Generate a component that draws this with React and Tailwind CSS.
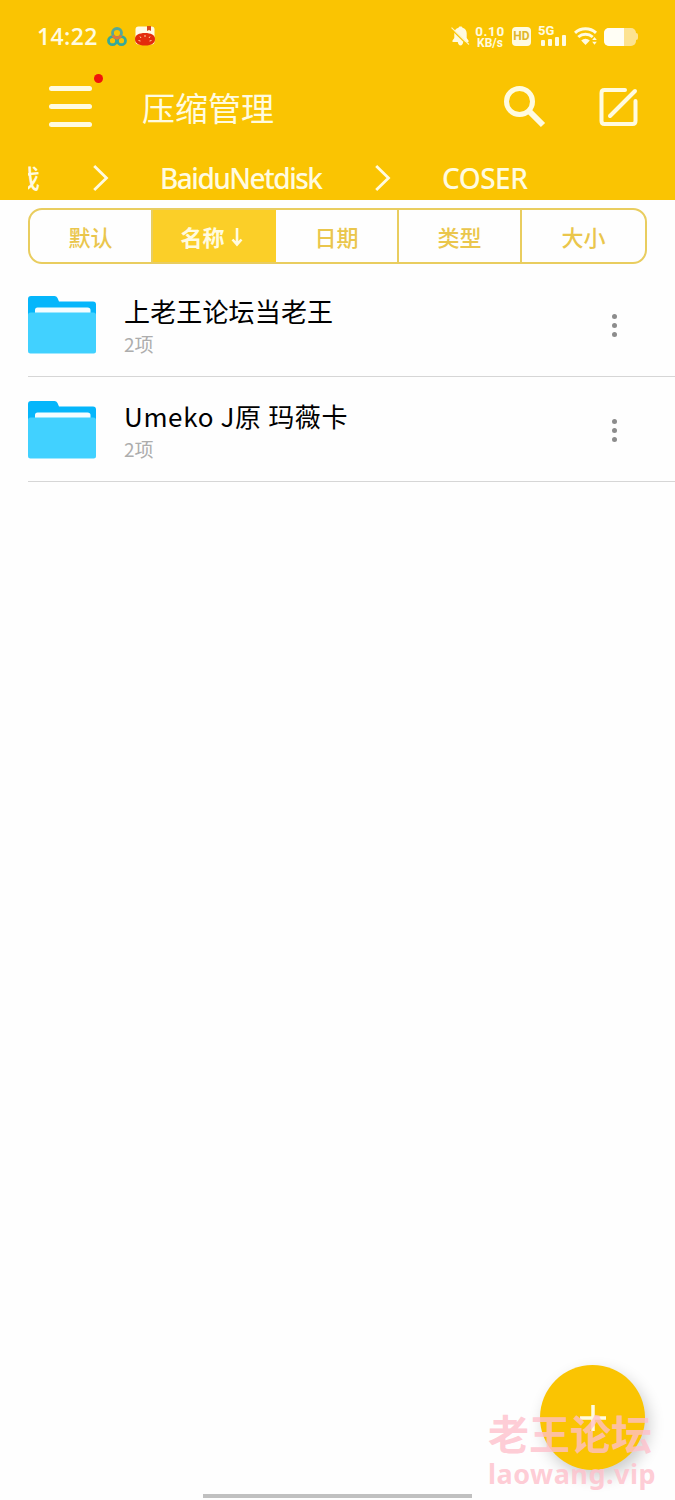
const crumbs = ["BaiduNetdisk", "COSER"];

const tabs = [
  { label: "默认" },
  { label: "名称", active: true },
  { label: "日期" },
  { label: "类型" },
  { label: "大小" },
];

const folders = [
  { name: "上老王论坛当老王", count: "2项", spacing: "tracking-[0.15px]" },
  { name: "Umeko J原 玛薇卡", count: "2项", spacing: "tracking-[0.65px]" },
];

function MuteIcon() {
  return (
    <svg width="19" height="20" viewBox="0 0 19 20" fill="none">
      <path
        d="M9.500 0.500c1.200 0 1.800.5 2 1.200 2.700.7 4.200 2.800 4.200 5.600v4.700l1.800 2.600v1.400H1.500v-1.400l1.800-2.600V7.300c0-2.800 1.500-4.900 4.200-5.600.2-.7.8-1.200 2-1.200zM6.800 16h5.400c-.3 2-1.300 3.500-2.700 3.500S7.100 18 6.800 16z"
        fill="#fffbe0"
      />
      <path d="M0.500 3.200 16.500 19" stroke="#fac402" strokeWidth="1.300" />
      <path d="M0.500 1.700 18 18.500" stroke="#fff3bd" strokeWidth="1.100" />
    </svg>
  );
}

function StatusBar() {
  return (
    <div className="flex h-[72px] items-center pl-[37px] pr-[37px] text-[#fffbe0]">
      <span className="w-[62px] whitespace-nowrap text-[23px] font-semibold leading-none tracking-[0.4px] font-['Open_Sans','Noto_Sans',sans-serif]">
        14:22
      </span>
      <svg className="ml-2 mt-px" width="20" height="20" viewBox="0 0 20 20" fill="none" strokeWidth="2.800">
        <circle cx="5.500" cy="13.700" r="4" stroke="#35a99a" />
        <circle cx="14.500" cy="13.700" r="4" stroke="#35a99a" />
        <circle cx="10" cy="6" r="4.500" stroke="#55a898" />
        <path d="M6 8.500a4.600 4.600 0 0 0 8 0" stroke="#e3763b" />
        <path d="M10 10v2.500" stroke="#e3763b" />
      </svg>
      <svg className="ml-2" width="20" height="20" viewBox="0 0 20 20">
        <rect x="0.500" y="0.500" width="19" height="18" rx="3" fill="#fffbe8" />
        <path d="M12 0h4v5l-2-1-2 1z" fill="#d94a1c" />
        <path d="M0 13c0-4 4-6 10-6s10 2 10 6-3 6.500-10 6.500S0 17 0 13z" fill="#e32b0c" />
        <path
          d="m5 10.500 1 1.500M10 9v2M15 10.500l-1 1.500M3.500 14.500l2 .5M16.500 14.500l-2 .5"
          stroke="#ffd9a0"
          strokeWidth="1"
        />
      </svg>

      <div className="ml-auto flex items-center">
        <MuteIcon />
        <div className="ml-[5px] mt-px flex w-[30px] flex-col items-center whitespace-nowrap font-bold font-['Roboto',sans-serif]">
          <span className="text-[13.500px] leading-[12px] tracking-[0.600px]">0.10</span>
          <span className="text-[12px] leading-[12px]">KB/s</span>
        </div>
        <div className="ml-[7px] mr-px flex h-[19px] w-[19px] items-center justify-center rounded-[4px] bg-[#fffbe0] text-[12px] font-bold leading-none text-[#e0b62a] font-['Roboto',sans-serif]">
          HD
        </div>
        <div className="ml-[6px] flex h-[22px] w-[30px] flex-col">
          <span className="text-[13px] font-bold leading-[11px] font-['Roboto',sans-serif]">5G</span>
          <div className="-mt-px flex items-end gap-[3px] self-end pr-[2px]">
            <i className="h-[6px] w-[4px] rounded-[1px] bg-[#fffbe0]" />
            <i className="h-[7px] w-[4px] rounded-[1px] bg-[#fffbe0]" />
            <i className="h-[9px] w-[4px] rounded-[1px] bg-[#fffbe0]" />
            <i className="h-[11px] w-[4px] rounded-[1px] bg-[#fffbe0]" />
          </div>
        </div>
        <svg className="ml-[6px]" width="24" height="20" viewBox="0 0 24 20" fill="none" stroke="#fffbe0" strokeWidth="3">
          <path d="M1 6.800a15.500 15.500 0 0 1 21 0" />
          <path d="M4.300 11a10.800 10.800 0 0 1 14.400 0" />
          <path d="M11.500 19l-4.300-4.600a6.500 6.500 0 0 1 8.600 0z" fill="#fffbe0" stroke="none" />
          <path d="M18.200 14 20.500 11l2.300 3zM18.200 15.800l2.300 3 2.300-3z" fill="#fffbe0" stroke="none" />
        </svg>
        <div className="ml-[6px] mt-px flex h-[18px] w-[32px] overflow-hidden rounded-[5px] bg-[#fde391]">
          <div className="w-5 bg-[#fffef5]" />
        </div>
        <div className="h-[7px] w-[2px] rounded-r bg-[#fde391]" />
      </div>
    </div>
  );
}

function TitleBar() {
  return (
    <div className="flex h-[84px] items-center pl-[49px] pr-[36px]">
      <div className="relative -mt-[15px] flex h-[41px] w-[43px] flex-col justify-between">
        <div className="h-[5px] rounded-full bg-[#fffbe0]" />
        <div className="h-[5px] rounded-full bg-[#fffbe0]" />
        <div className="h-[5px] rounded-full bg-[#fffbe0]" />
        <span className="absolute -top-[12px] left-[45px] h-[9px] w-[9px] rounded-full bg-[#f0140a]" />
      </div>
      <h1 className="-mt-[11px] ml-[50px] whitespace-nowrap text-[33px] font-normal leading-none text-[#fffbe0]">
        压缩管理
      </h1>
      <svg className="-mt-[17px] ml-auto" width="44" height="44" viewBox="0 0 44 44" fill="none" stroke="#fffbe0">
        <circle cx="16.500" cy="17.500" r="13" strokeWidth="5" />
        <path d="M26 27 40 41" strokeWidth="6" />
      </svg>
      <svg
        className="-mt-[15px] ml-[50px]"
        width="42"
        height="40"
        viewBox="0 0 42 40"
        fill="none"
        stroke="#fffbe0"
        strokeWidth="4"
        strokeLinecap="round"
        strokeLinejoin="round"
      >
        <path d="M28 3H7.500q-3 0-3 3v28q0 3 3 3h28q3 0 3-3V14" />
        <path d="M13 29 38 4" />
      </svg>
    </div>
  );
}

function Chevron() {
  return (
    <svg width="16" height="27" viewBox="0 0 16 27" fill="none" stroke="#fffbe0" strokeWidth="2.800">
      <path d="M1.200 1 13.500 13 1.200 25" />
    </svg>
  );
}

function Breadcrumbs() {
  return (
    <div className="flex h-[44px] items-center pl-7 text-[28px] text-[#fffbe0]">
      {/* scrolled out of view on the left */}
      <div className="flex w-3 justify-end overflow-hidden">
        <span className="text-[25px] font-medium leading-[32px]">戏</span>
      </div>
      <div className="ml-[53px] flex w-[67px]">
        <Chevron />
      </div>
      <span className="w-[162px] whitespace-nowrap font-medium tracking-[-1.500px]">{crumbs[0]}</span>
      <div className="ml-[53px] flex w-[67px]">
        <Chevron />
      </div>
      <span className="whitespace-nowrap font-medium tracking-[-0.500px]">{crumbs[1]}</span>
    </div>
  );
}

function SortTabs() {
  return (
    <div className="mx-7 mt-2 grid h-14 grid-cols-5 overflow-hidden rounded-[14px] border-2 border-[#e9cd5f]">
      {tabs.map((tab, i) => (
        <div
          key={tab.label}
          className={`flex items-center justify-center pt-px text-[22px] leading-none ${
            i < tabs.length - 1 ? "border-r-2" : ""
          } ${
            tab.active
              ? "border-[#fbcf28] bg-[#fbcf28] pr-1 font-bold text-[#fffbe0]"
              : "border-[#e9cd5f] font-medium text-[#eac64c]"
          }`}
        >
          {tab.label}
          {tab.active && (
            <svg className="ml-1.5" width="12" height="20" viewBox="0 0 12 20" fill="none" stroke="#fffbe0" strokeWidth="2.600">
              <path d="M6 1v16M1.500 12.500 6 17.500l4.500-5" />
            </svg>
          )}
        </div>
      ))}
    </div>
  );
}

function FolderIcon() {
  return (
    <svg width="68" height="58" viewBox="0 0 68 58">
      <path d="M0 20V3q0-3 3-3h23.500q2 0 3 2l1.500 3.500h34q3 0 3 3V20z" fill="#05b6fb" />
      <path d="M7 19v-5q0-2.500 2.500-2.500h50q3 0 3 2.500v5z" fill="#f4fdff" />
      <path d="M0 19q0-2.500 2.500-2.500h63q2.500 0 2.500 2.500v36q0 2.500-2.500 2.500h-63Q0 57.500 0 55z" fill="#41d1ff" />
    </svg>
  );
}

function FolderRow({ folder }) {
  return (
    <div className="ml-7 flex h-[105.500px] items-center border-b border-[#d6d6d6] pt-[3px] font-['Noto_Sans_CJK_SC',sans-serif]">
      <FolderIcon />
      <div className="ml-7 flex-1 pt-0.5">
        <p className={`whitespace-nowrap text-[26px] leading-[36px] text-black ${folder.spacing}`}>{folder.name}</p>
        <p className="text-[19px] font-normal leading-[30px] text-[#adadad]">{folder.count}</p>
      </div>
      <div className="mr-[58px] mt-px flex flex-col gap-1">
        <i className="h-[5px] w-[5px] rounded-full bg-[#8c8c8c]" />
        <i className="h-[5px] w-[5px] rounded-full bg-[#8c8c8c]" />
        <i className="h-[5px] w-[5px] rounded-full bg-[#8c8c8c]" />
      </div>
    </div>
  );
}

export default function App() {
  return (
    <div className="relative h-[1500px] w-[675px] overflow-hidden bg-[#fefefe] font-['Noto_Sans','Noto_Sans_CJK_SC',sans-serif]">
      <header className="h-[200px] bg-[#fac402]">
        <StatusBar />
        <TitleBar />
        <Breadcrumbs />
      </header>

      <SortTabs />

      <main className="mt-[7px]">
        {folders.map((folder) => (
          <FolderRow key={folder.name} folder={folder} />
        ))}
      </main>

      <button className="absolute left-[540px] top-[1365px] flex h-[105px] w-[105px] items-center justify-center rounded-full bg-[#fac402] shadow-[4px_7px_16px_rgba(0,0,0,0.2)]">
        <svg width="26" height="26" viewBox="0 0 26 26" stroke="#fffbe0" strokeWidth="3.500">
          <path d="M13 0v26M0 13h26" />
        </svg>
      </button>

      <div className="pointer-events-none absolute left-[488px] top-[1411px] whitespace-nowrap font-bold text-[#ffc0cb]/80">
        <p className="text-[41px] leading-[46px]">老王论坛</p>
        <p className="text-[27px] leading-[34px] tracking-[0.500px] font-['Noto_Sans',sans-serif]">laowang.vip</p>
      </div>

      <div className="absolute left-[203px] top-[1494px] h-1 w-[269px] bg-[#c0c0c0]" />
    </div>
  );
}
